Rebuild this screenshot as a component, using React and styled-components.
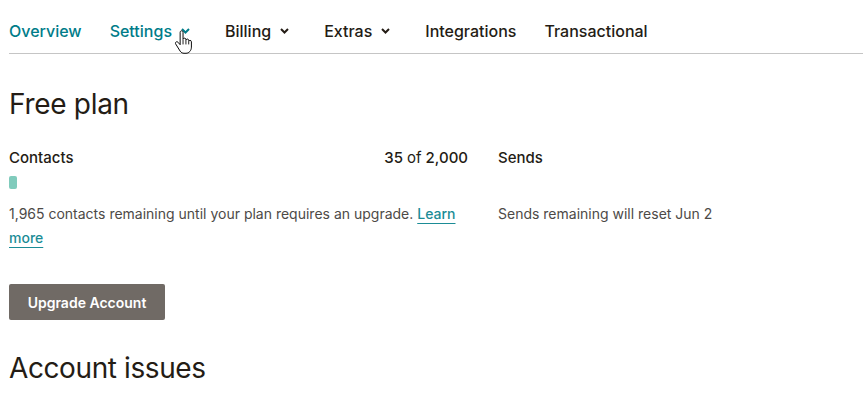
import React from "react";
import styled, { createGlobalStyle } from "styled-components";

const Global = createGlobalStyle`
  html, body {
    margin: 0;
    padding: 0;
    background: #ffffff;
    overflow: hidden;
  }
  body {
    font-family: Inter, "Liberation Sans", Arial, sans-serif;
    color: #241c15;
  }
`;

const Page = styled.div`
  padding: 0 0 0 9px;
  width: 854px;
`;

const Nav = styled.nav`
  display: flex;
  align-items: center;
  height: 54px;
  padding-top: 9px;
  box-sizing: border-box;
  border-bottom: 1px solid #c5c5c5;
  position: relative;
`;

const NavItem = styled.a`
  display: flex;
  align-items: center;
  gap: 9px;
  margin-right: ${(p) => (p.$drop ? "35px" : "28px")};
  font-size: 16px;
  font-weight: 500;
  color: ${(p) => (p.$active ? "#007c89" : "#241c15")};
  text-decoration: none;
  position: relative;
`;

const Chevron = ({ color }) => (
  <svg width="9" height="6" viewBox="0 0 9 6">
    <path d="M1 1l3.5 3.5L8 1" fill="none" stroke={color} strokeWidth="2" />
  </svg>
);

const Cursor = styled.svg`
  position: absolute;
  left: 165px;
  top: 30px;
`;

const Title = styled.h1`
  margin: 33px 0 0;
  font-size: 28px;
  font-weight: 400;
  letter-spacing: -0.3px;
  line-height: 34px;
`;

const Usage = styled.div`
  display: grid;
  grid-template-columns: 459px minmax(0, 1fr);
  column-gap: 30px;
  margin-top: 27px;
`;

const Col = styled.div`
  display: flex;
  flex-direction: column;
`;

const Head = styled.div`
  display: flex;
  justify-content: space-between;
  font-size: 15px;
  font-weight: 500;
  line-height: 20px;
  b {
    font-weight: 500;
  }
  span {
    font-weight: 400;
  }
`;

const Track = styled.div`
  height: 13px;
  margin-top: 8px;
`;

const Bar = styled.div`
  height: 13px;
  background: #80cbbc;
  border-radius: 2px;
`;

const Note = styled.p`
  margin: 13px 0 0;
  font-size: 14px;
  line-height: 24px;
  color: #4d4a47;
  a {
    color: #1b8c96;
    font-weight: 500;
    text-decoration: underline;
    text-underline-offset: 4px;
  }
`;

const Button = styled.button`
  margin-top: 34px;
  width: 156px;
  height: 36px;
  border: none;
  border-radius: 2px;
  background: #706a65;
  color: #ffffff;
  font-family: inherit;
  font-size: 14px;
  font-weight: 600;
`;

const Section = styled.h2`
  margin: 31px 0 0;
  font-size: 28px;
  font-weight: 400;
  letter-spacing: -0.4px;
  line-height: 34px;
`;

const items = [
  { label: "Overview", active: true },
  { label: "Settings", active: true, drop: true },
  { label: "Billing", drop: true },
  { label: "Extras", drop: true },
  { label: "Integrations" },
  { label: "Transactional" },
];

export default function App() {
  const used = 35;
  const limit = 2000;
  return (
    <>
      <Global />
      <Page>
        <Nav>
          {items.map((it) => (
            <NavItem key={it.label} $active={it.active} $drop={it.drop} href="#">
              {it.label}
              {it.drop && <Chevron color={it.active ? "#007c89" : "#241c15"} />}
            </NavItem>
          ))}
          <Cursor width="20" height="25" viewBox="0 0 20 26">
            <path
              d="M6 2.5c0-1 .7-1.7 1.5-1.7S9 1.5 9 2.5v7.2c.2-.8.9-1.2 1.6-1.2.8 0 1.4.6 1.4 1.4v.6c.2-.7.8-1.1 1.5-1.1.8 0 1.4.6 1.4 1.4v1c.2-.6.8-1 1.4-1 .8 0 1.4.6 1.4 1.4v5.6c0 3.4-2.3 6.4-5.6 6.4H10c-1.7 0-3-.8-4-2.2L1.4 14.6c-.5-.7-.4-1.6.3-2.1.6-.5 1.5-.4 2 .2L6 15.3V2.5z"
              fill="#ffffff"
              stroke="#000000"
              strokeWidth="1"
              strokeLinejoin="round"
            />
            <path d="M9 10v5M12 10.5v4.5M14.9 12v3" stroke="#000" strokeWidth="0.9" />
          </Cursor>
        </Nav>
        <Title>Free plan</Title>
        <Usage>
          <Col>
            <Head>
              Contacts
              <b>
                35 <span>of</span> 2,000
              </b>
            </Head>
            <Track>
              <Bar style={{ width: `${Math.max(8, (used / limit) * 459)}px` }} />
            </Track>
            <Note>
              1,965 contacts remaining until your plan requires an upgrade.{" "}
              <a href="#">Learn more</a>
            </Note>
          </Col>
          <Col>
            <Head>Sends</Head>
            <Track />
            <Note>Sends remaining will reset Jun 2</Note>
          </Col>
        </Usage>
        <Button>Upgrade Account</Button>
        <Section>Account issues</Section>
      </Page>
    </>
  );
}
